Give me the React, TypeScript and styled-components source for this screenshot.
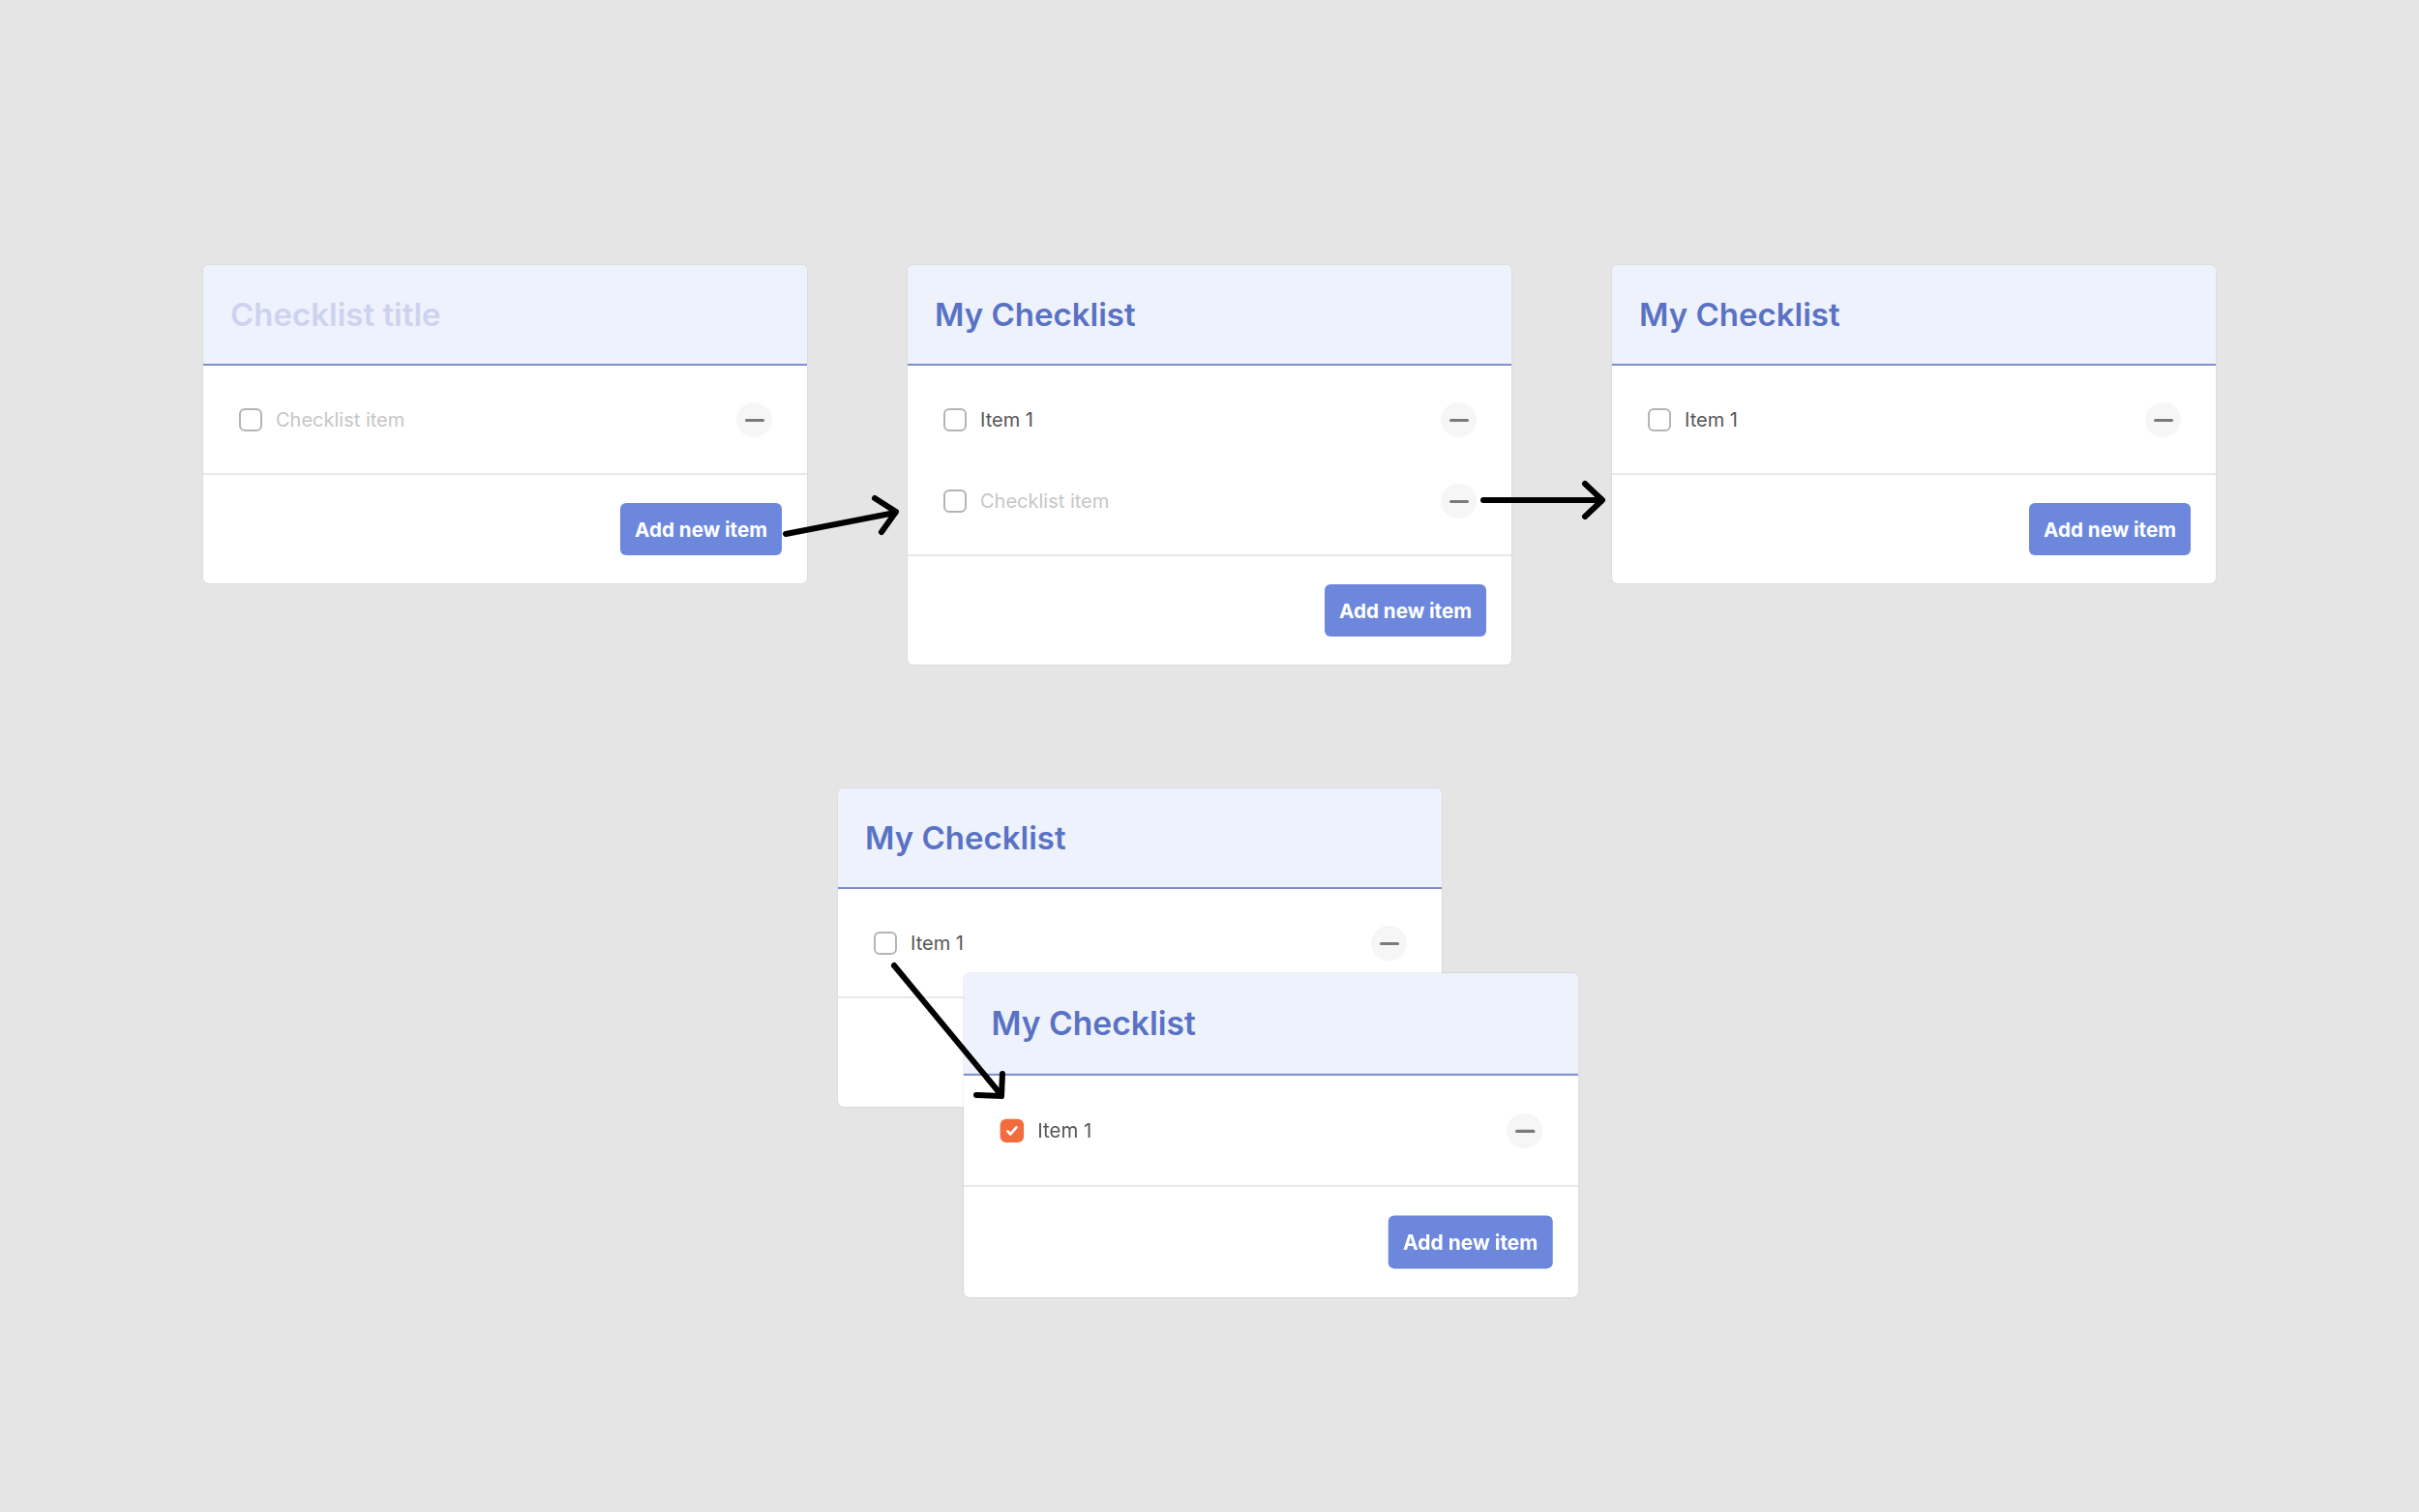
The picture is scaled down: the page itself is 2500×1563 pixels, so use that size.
import React from "react";
import styled, { createGlobalStyle } from "styled-components";

const GlobalStyle = createGlobalStyle`
  html, body {
    margin: 0;
    padding: 0;
    background: #e5e5e5;
    font-family: Inter, "Noto Sans", "Liberation Sans", sans-serif;
  }
  * { box-sizing: border-box; }
`;

const Page = styled.div`
  position: relative;
  width: 2500px;
  height: 1563px;
  padding: 274px 0 0 210px;
  overflow: hidden;
`;

const TopRow = styled.div`
  display: flex;
  align-items: flex-start;
  gap: 104px;
`;

const BottomGroup = styled.div`
  position: relative;
  width: 624px;
  margin: 128px 0 0 656px;
`;

const CardBox = styled.div`
  width: 624px;
  background: #ffffff;
  border-radius: 6px;
  overflow: hidden;
  box-shadow: 0 0 0 1px rgba(0, 0, 0, 0.03);
`;

const OverlayCard = styled.div`
  position: absolute;
  left: 130px;
  top: 191px;
  transform: scale(1.018);
  transform-origin: top left;
  z-index: 1;
  & > div {
    box-shadow: 0 0 0 1px rgba(0, 0, 0, 0.06);
  }
`;

const Header = styled.div`
  height: 104px;
  display: flex;
  align-items: center;
  padding: 0 28px;
  background: #eef2fd;
  border-bottom: 2px solid #7c8ecc;
`;

const Title = styled.h2<{ $placeholder?: boolean }>`
  margin: 0;
  font-size: 33px;
  font-weight: 600;
  letter-spacing: 0;
  color: ${(p) => (p.$placeholder ? "#cdd3ee" : "#5a72c4")};
`;

const ItemList = styled.div`
  padding: 14px 0 13px;
  border-bottom: 2px solid #e8e8e8;
`;

const Row = styled.div`
  height: 84px;
  display: flex;
  align-items: center;
  gap: 14px;
  padding: 0 36px 0 37px;
`;

const Box = styled.span<{ $checked?: boolean }>`
  width: 24px;
  height: 24px;
  flex: none;
  border-radius: 6px;
  display: flex;
  align-items: center;
  justify-content: center;
  background: ${(p) => (p.$checked ? "#f26c3e" : "#ffffff")};
  border: ${(p) => (p.$checked ? "none" : "2px solid #b4b4b4")};
`;

const ItemText = styled.span<{ $placeholder?: boolean }>`
  flex: 1;
  font-size: 20px;
  font-weight: 400;
  color: ${(p) => (p.$placeholder ? "#c6c6c6" : "#555555")};
`;

const RemoveButton = styled.span`
  width: 37px;
  height: 36px;
  border-radius: 50%;
  background: #f6f6f6;
  display: flex;
  align-items: center;
  justify-content: center;
  flex: none;
`;

const MinusBar = styled.span`
  width: 20px;
  height: 3px;
  border-radius: 2px;
  background: #7a7a7a;
`;

const Footer = styled.div`
  display: flex;
  justify-content: flex-end;
  padding: 29px 26px 29px;
`;

const AddButton = styled.button`
  height: 54px;
  padding: 0 15px;
  border: none;
  border-radius: 6px;
  background: #6c87dc;
  color: #ffffff;
  font-family: Inter, "Noto Sans", "Liberation Sans", sans-serif;
  font-size: 20.6px;
  font-weight: 700;
`;

const Arrows = styled.svg`
  position: absolute;
  left: 0;
  top: 0;
  z-index: 5;
  pointer-events: none;
`;

type Item = { text: string; placeholder?: boolean; checked?: boolean };

function Card({
  title,
  placeholderTitle,
  items,
}: {
  title: string;
  placeholderTitle?: boolean;
  items: Item[];
}) {
  return (
    <CardBox>
      <Header>
        <Title $placeholder={placeholderTitle}>{title}</Title>
      </Header>
      <ItemList>
        {items.map((it, i) => (
          <Row key={i}>
            <Box $checked={it.checked}>
              {it.checked && (
                <svg width="16" height="16" viewBox="0 0 16 16">
                  <polyline
                    points="3.5,8.5 6.5,11.5 12.5,4.5"
                    fill="none"
                    stroke="#ffffff"
                    strokeWidth="2.6"
                    strokeLinecap="round"
                    strokeLinejoin="round"
                  />
                </svg>
              )}
            </Box>
            <ItemText $placeholder={it.placeholder}>{it.text}</ItemText>
            <RemoveButton>
              <MinusBar />
            </RemoveButton>
          </Row>
        ))}
      </ItemList>
      <Footer>
        <AddButton>Add new item</AddButton>
      </Footer>
    </CardBox>
  );
}

export default function App() {
  return (
    <>
      <GlobalStyle />
      <Page>
        <TopRow>
          <Card
            title="Checklist title"
            placeholderTitle
            items={[{ text: "Checklist item", placeholder: true }]}
          />
          <Card
            title="My Checklist"
            items={[
              { text: "Item 1" },
              { text: "Checklist item", placeholder: true },
            ]}
          />
          <Card title="My Checklist" items={[{ text: "Item 1" }]} />
        </TopRow>
        <BottomGroup>
          <Card title="My Checklist" items={[{ text: "Item 1" }]} />
          <OverlayCard>
            <Card title="My Checklist" items={[{ text: "Item 1", checked: true }]} />
          </OverlayCard>
        </BottomGroup>
        <Arrows width="2500" height="1563" viewBox="0 0 2500 1563">
          <g
            fill="none"
            stroke="#000000"
            strokeWidth="6"
            strokeLinecap="round"
            strokeLinejoin="round"
          >
            <path d="M812 552 L925 530" />
            <path d="M904 515 L926 529 L911 550" />
            <path d="M1533 517 L1655 517" />
            <path d="M1638 500 L1656 517 L1638 534" />
            <path d="M924 998 L1034 1131" />
            <path d="M1036 1110 L1035 1133 L1009 1132" />
          </g>
        </Arrows>
      </Page>
    </>
  );
}
